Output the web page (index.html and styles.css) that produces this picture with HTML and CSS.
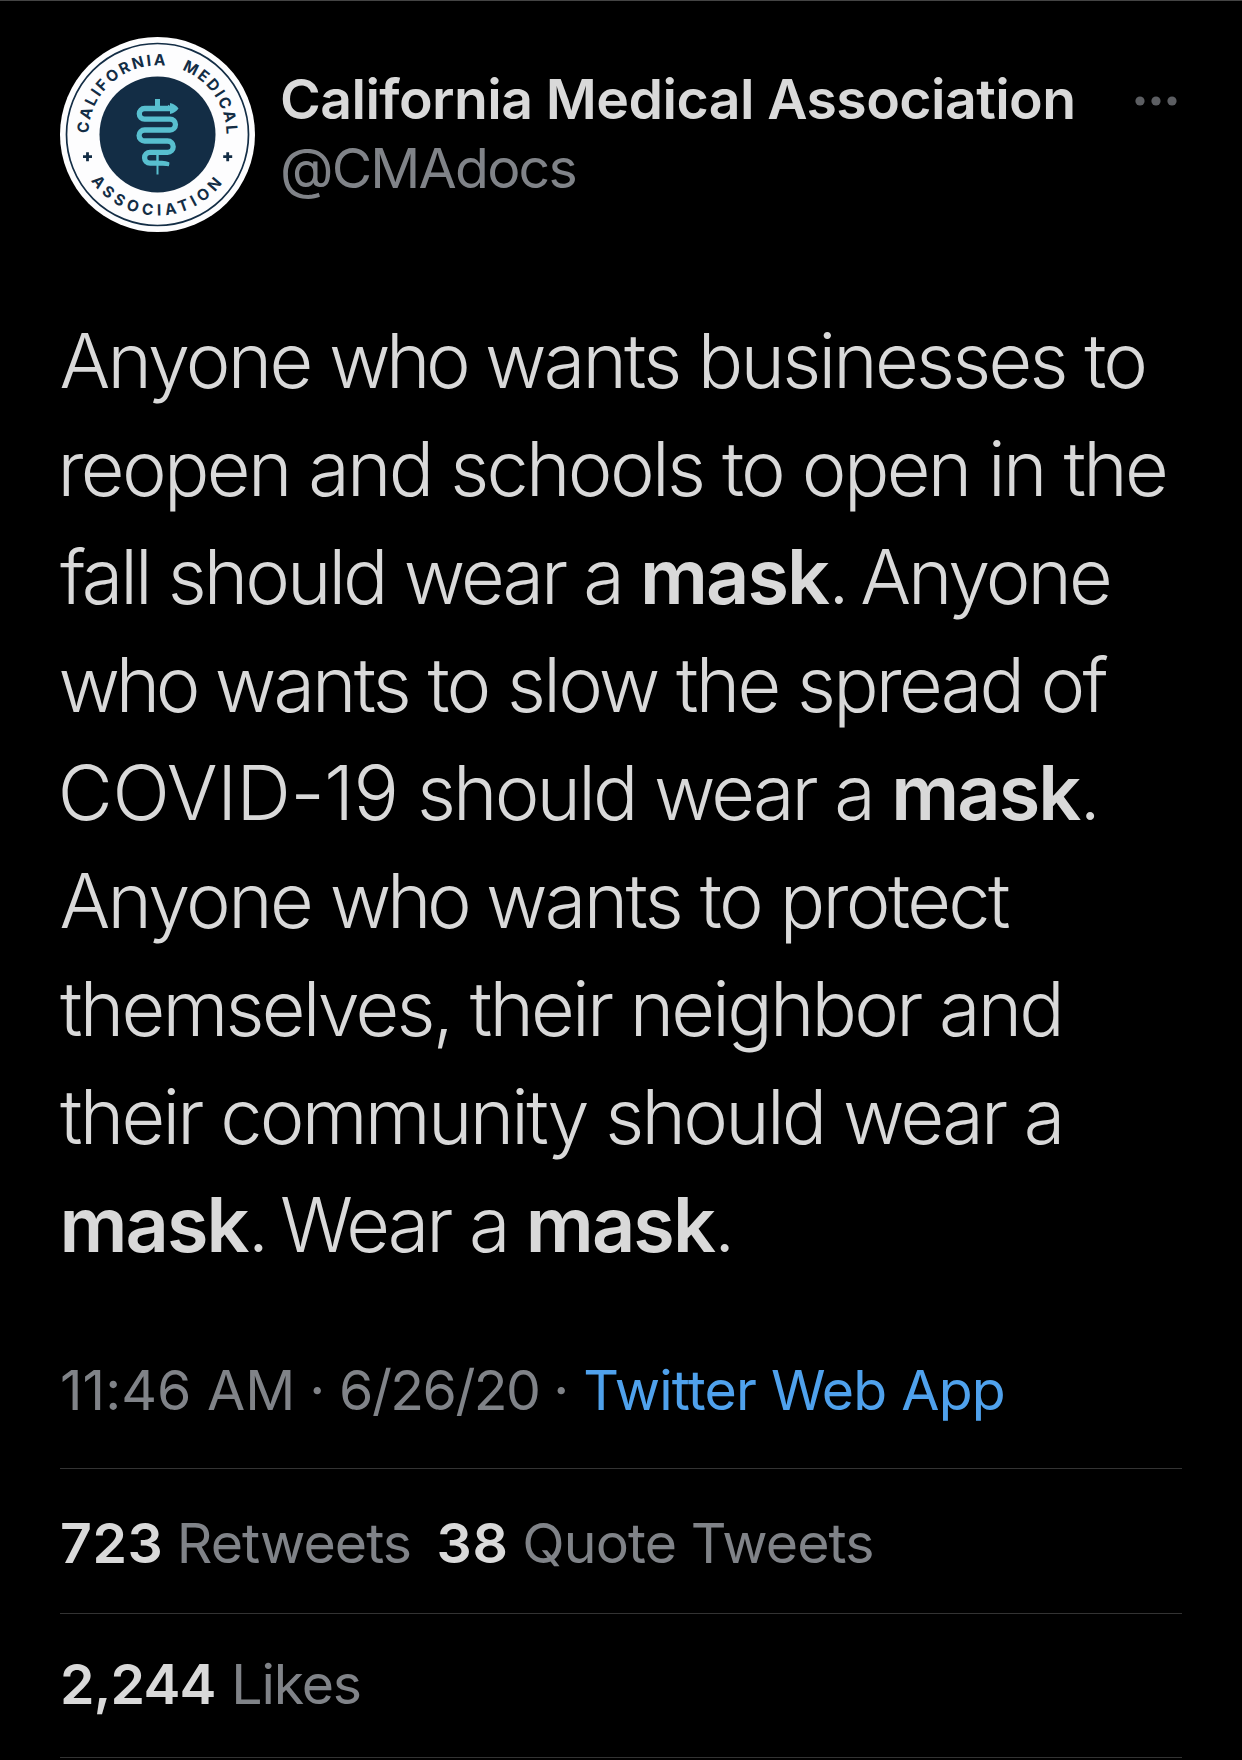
FILE: index.html
```
<!DOCTYPE html>
<html lang="en">
<head>
<meta charset="utf-8">
<title>California Medical Association on Twitter</title>
<link rel="stylesheet" href="styles.css">
</head>
<body>
<article class="tweet">
  <header class="author">
    <svg class="avatar" viewBox="0 0 195 195" role="img" aria-label="California Medical Association logo">
      <defs>
        <path id="arc-top" d="M28.5 97.5a69 69 0 0 1 138 0"/>
        <path id="arc-bottom" d="M16.5 97.5a81 81 0 0 0 162 0"/>
      </defs>
      <circle cx="97.5" cy="97.5" r="97.5" fill="#fdfdfe"/>
      <circle cx="97.5" cy="97.5" r="91" fill="none" stroke="#132d45" stroke-width="1.7"/>
      <circle cx="97.5" cy="97.5" r="58" fill="#132d45"/>
      <g class="seal-text">
        <text><textPath href="#arc-top" startOffset="1" textLength="115">CALIFORNIA</textPath></text>
        <text><textPath href="#arc-top" startOffset="133" textLength="83">MEDICAL</textPath></text>
        <text><textPath href="#arc-bottom" startOffset="49" textLength="153">ASSOCIATION</textPath></text>
      </g>
      <path d="M27.500 115.200v9M23 119.700h9M167.700 115.200v9M163.200 119.700h9" stroke="#132d45" stroke-width="2.8"/>
      <g fill="none" stroke="#58bfcf">
        <path d="M97.500 62v8" stroke-width="5"/>
        <path d="M97.500 118v7" stroke-width="2.400"/>
        <path d="M97.500 128v9.500" stroke-width="2"/>
        <path d="M111 71.500H84.600a5.300 5.300 0 0 0 0 10.600H110a5.450 5.450 0 0 1 0 10.900H84.600a5.500 5.500 0 0 0 0 11H107.500a5.700 5.700 0 0 1 0 11.400H90a5.400 5.400 0 0 0 0 10.800h8" stroke-width="5.300"/>
      </g>
      <path d="M108 67.800l2 1.200V66q5.500 1.200 8.500 5.500-3 4.300-8.500 5.500V74h-2zM97 123.700h5q4 0 7.300 1.600.5 2.200-.5 4-3-.7-6.800-.6h-5z" fill="#58bfcf"/>
    </svg>
    <div class="identity">
      <div class="name">California Medical Association</div>
      <div class="handle">@CMAdocs</div>
    </div>
    <svg class="more" viewBox="0 0 42 10" aria-label="More"><circle cx="5" cy="5" r="4.600"/><circle cx="21" cy="5" r="4.600"/><circle cx="37" cy="5" r="4.600"/></svg>
  </header>

  <p class="body">
    <span class="line l1">Anyone <span class="who">who</span> wants businesses to</span>
    <span class="line l2">reopen and schools to open in the</span>
    <span class="line l3">fall should wear a <b>mask</b><span class="stop">. </span>Anyone</span>
    <span class="line l4"><span class="who">who</span> wants to slow the spread of</span>
    <span class="line l5"><span class="covid">COVID-19</span> should wear a <b>mask</b>.</span>
    <span class="line l6">Anyone <span class="who">who</span> wants to protect</span>
    <span class="line l7">themselves, their neighbor and</span>
    <span class="line l8">their community should wear a</span>
    <span class="line l9"><b>mask</b><span class="stop">. </span>Wear a <b>mask</b>.</span>
  </p>

  <div class="meta"><span class="time">11:46 AM</span><span class="dot">·</span><span class="date">6/26/20</span><span class="dot">·</span><a class="source">Twitter Web App</a></div>
  <div class="stats"><strong class="n1">723</strong><span class="retweets">Retweets</span><strong class="n2">38</strong><span class="quotes">Quote Tweets</span></div>
  <div class="stats likes"><strong class="n3">2,244</strong><span class="liked">Likes</span></div>
</article>
</body>
</html>
```
FILE: styles.css
```
* { box-sizing: border-box; }

body {
  margin: 0;
  background: #000;
  color: #d9d9d9;
  font-family: Inter, "Liberation Sans", sans-serif;
}

.tweet {
  width: 1242px;
  height: 1760px;
  padding: 36px 60px 0;
  border-top: 1px solid #444;
  overflow: hidden;
}

/* Author row */
.author { display: flex; height: 195px; }
.avatar { width: 195px; height: 195px; flex: none; }
.seal-text { fill: #132d45; font-size: 15.5px; font-weight: 700; }
.identity {
  flex: 1;
  padding: 27px 0 0 25px;
  white-space: nowrap;
  font-size: 55.4px;
  line-height: 69px;
}
.name { font-weight: 600; letter-spacing: -0.58px; }
.handle { color: #808388; letter-spacing: -1.8px; }
.more { width: 42px; height: 10px; flex: none; margin: 59px 5.5px 0 0; fill: #5c5e62; }

/* Tweet text */
.body { margin: 75px 0 0; font-size: 75.5px; line-height: 108px; font-weight: 300; }
.line { display: block; white-space: nowrap; }
.line b { font-weight: 600; letter-spacing: -1.9px; }
.line .who { letter-spacing: -4.4px; }
.line .covid { letter-spacing: -0.4px; }
.stop { word-spacing: -4.5px; }
.l1 { letter-spacing: -2.75px; margin-left: -0.6px; }
.l2 { letter-spacing: -2.66px; margin-left: -2.4px; }
.l3 { letter-spacing: -3px; }
.l4 { letter-spacing: -2.76px; margin-left: -1.4px; }
.l5 { letter-spacing: -2.85px; margin-left: -2.2px; }
.l6 { letter-spacing: -2.62px; margin-left: -0.6px; }
.l7 { letter-spacing: -2.78px; }
.l8 { letter-spacing: -2.75px; }
.l9 { letter-spacing: -2.9px; margin-left: -0.5px; }

/* Date and source */
.meta {
  display: flex;
  height: 190px;
  padding-top: 57px;
  border-bottom: 1px solid #333;
  color: #808388;
  font-size: 55.4px;
  line-height: 108px;
  white-space: nowrap;
}
.time { letter-spacing: 0.05px; }
.date { letter-spacing: -1.53px; }
.dot { width: 43.7px; text-align: center; }
.source { color: #4fa1ec; letter-spacing: -0.8px; }

/* Counters */
.stats {
  display: flex;
  height: 145px;
  padding-top: 20px;
  border-bottom: 1px solid #333;
  color: #808388;
  font-size: 55.4px;
  line-height: 108px;
  white-space: nowrap;
}
.likes { height: 144px; padding-top: 16px; }
.stats strong { color: #d9d9d9; font-weight: 600; margin-right: 13.5px; }
.n1 { letter-spacing: 0.54px; }
.n2 { letter-spacing: 0.76px; }
.stats .n3 { letter-spacing: -0.8px; margin-right: 15.7px; }
.retweets { letter-spacing: -0.94px; margin-right: 25.5px; }
.quotes { letter-spacing: -0.87px; }
.liked { letter-spacing: -1.17px; }
```
